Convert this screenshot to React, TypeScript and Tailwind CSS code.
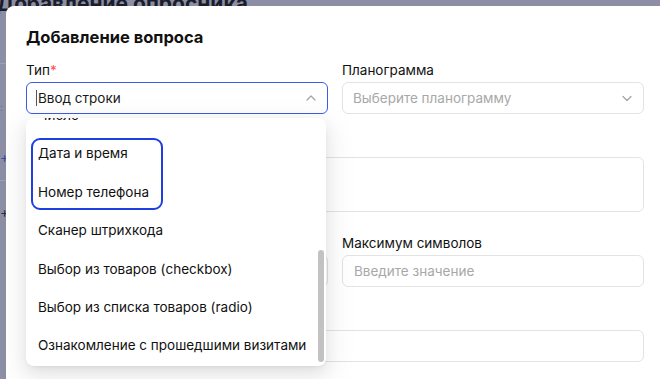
import React from "react";

const options = [
  "Число",
  "Дата и время",
  "Номер телефона",
  "Сканер штрихкода",
  "Выбор из товаров (checkbox)",
  "Выбор из списка товаров (radio)",
  "Ознакомление с прошедшими визитами",
];

function Chevron({ up }: { up?: boolean }) {
  return (
    <svg width="12" height="12" viewBox="0 0 12 12" fill="none">
      <path
        d={up ? "M2 8l4-4 4 4" : "M2 4.5l4 4 4-4"}
        stroke="#a3a3a3"
        strokeWidth="1.2"
        strokeLinecap="round"
        strokeLinejoin="round"
      />
    </svg>
  );
}

function Label({ children, required }: { children?: React.ReactNode; required?: boolean }) {
  return (
    <div className="h-5 mb-[2px] text-[13.5px] leading-5 text-[#111]">
      {children}
      {required && <span className="text-[#ff4d4f]">*</span>}
    </div>
  );
}

export default function App() {
  return (
    <div
      className="relative w-[660px] h-[379px] overflow-hidden bg-[#8b8ea4]"
      style={{ fontFamily: "Inter, 'Noto Sans', sans-serif" }}
    >
      {/* page behind the overlay */}
      <div className="-mt-[10px] -ml-[4px] text-[21px] font-bold leading-[28px] text-[#1c1d2b] whitespace-nowrap">
        Добавление опросника
      </div>
      <div className="flex flex-col w-[6px] text-[#2a2d45]">
        <div className="mt-[45px] h-px bg-[#9da0b4]" />
        <div className="mt-[38px] text-[10px] leading-[10px] text-[#6f7288]">:</div>
        <div className="mt-[38px] text-[14px] leading-[14px] text-[#3848a8]">+</div>
        <div className="mt-[16px] h-px bg-[#9da0b4]" />
        <div className="mt-[24px] text-[14px] leading-[14px]">+</div>
      </div>

      {/* modal */}
      <div className="absolute left-[6px] top-[6px] w-[658px] h-[400px] rounded-tl-[8px] bg-white px-5 pt-[19px]">
        <div className="text-[16.5px] font-bold leading-6 text-[#111] mb-[11px]">Добавление вопроса</div>

        <div className="grid grid-cols-2 gap-x-[14px]">
          <div className="mb-[21px]">
            <Label required>Тип</Label>
            <div className="h-8 rounded-[6px] border border-[#3e5be6] flex items-center pl-[9px] pr-[10px]">
              <span className="w-px h-[16px] bg-[#555] mr-px" />
              <span className="flex-1 text-[13.5px] text-[#1a1a1a]">Ввод строки</span>
              <Chevron up />
            </div>
          </div>
          <div className="mb-[21px]">
            <Label>Планограмма</Label>
            <div className="h-8 rounded-[6px] border border-[#e3e3e3] flex items-center px-[10px]">
              <span className="flex-1 text-[13.5px] text-[#a8a8a8]">Выберите планограмму</span>
              <Chevron />
            </div>
          </div>

          <div className="col-span-2 mb-[21px]">
            <Label />
            <div className="h-[55px] rounded-[6px] border border-[#e3e3e3]" />
          </div>

          <div className="mb-[21px]">
            <Label />
            <div className="h-8 rounded-[6px] border border-[#e3e3e3]" />
          </div>
          <div className="mb-[21px]">
            <Label>Максимум символов</Label>
            <div className="h-8 rounded-[6px] border border-[#e3e3e3] flex items-center px-[11px] text-[13.5px] text-[#a8a8a8]">
              Введите значение
            </div>
          </div>

          <div className="col-span-2">
            <Label />
            <div className="h-8 rounded-[6px] border border-[#e3e3e3]" />
          </div>
        </div>
      </div>

      {/* open dropdown */}
      <div className="absolute left-[26px] top-[118px] w-[300px] h-[248px] rounded-[8px] bg-white overflow-hidden shadow-[0_6px_16px_rgba(0,0,0,0.08),0_3px_6px_-4px_rgba(0,0,0,0.12),0_9px_28px_8px_rgba(0,0,0,0.05)]">
        <div className="-mt-[22px]">
          {options.map((o) => (
            <div key={o} className="h-[38.4px] flex items-center pl-3 text-[13.5px] text-[#111] whitespace-nowrap">
              {o}
            </div>
          ))}
        </div>
        <div className="absolute right-[2px] top-[132px] w-[6px] h-[112px] rounded-full bg-[#c2c2c2]" />
        <div className="absolute left-[5px] top-[20px] w-[132px] h-[72px] rounded-[9px] border-2 border-[#1f3fe0]" />
      </div>
    </div>
  );
}
